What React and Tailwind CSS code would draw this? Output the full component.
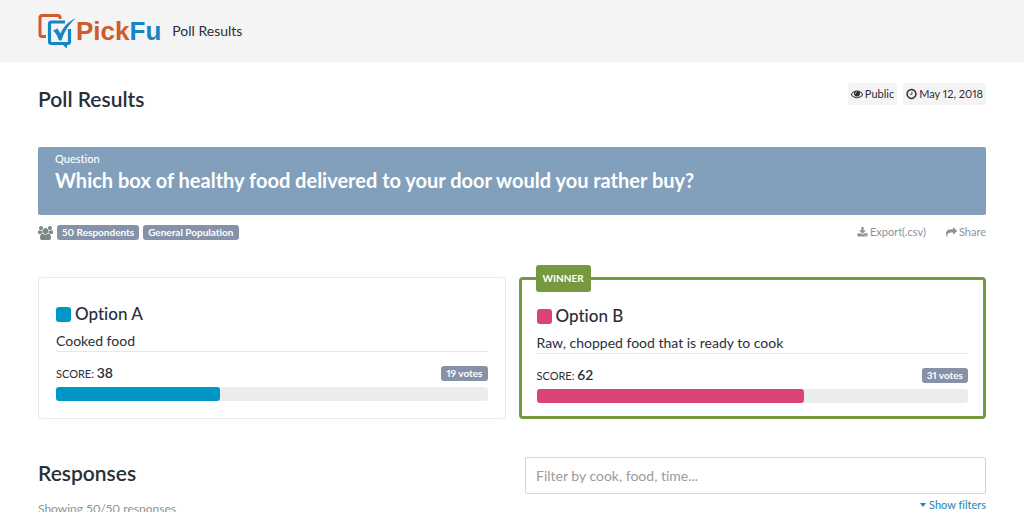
import React, { useState } from 'react';

const icons = {
  eye: {
    box: '0 0 1792 1792',
    d: 'M1664 960q-152-236-381-353 61 104 61 225 0 185-131.5 316.5t-316.5 131.5-316.5-131.5-131.5-316.5q0-121 61-225-229 117-381 353 133 205 333.5 326.5t434.5 121.5 434.5-121.5 333.5-326.5zm-720-384q0-20-14-34t-34-14q-125 0-214.5 89.5t-89.5 214.5q0 20 14 34t34 14 34-14 14-34q0-86 61-147t147-61q20 0 34-14t14-34zm848 384q0 34-20 69-140 230-376.5 368.5t-499.5 138.5-499.5-139-376.5-368q-20-35-20-69t20-69q140-229 376.5-368t499.5-139 499.5 139 376.5 368q20 35 20 69z',
  },
  clock: {
    box: '128 0 1536 1792',
    d: 'M1024 544v448q0 14-9 23t-23 9h-320q-14 0-23-9t-9-23v-64q0-14 9-23t23-9h224v-352q0-14 9-23t23-9h64q14 0 23 9t9 23zm416 352q0-148-73-273t-198-198-273-73-273 73-198 198-73 273 73 273 198 198 273 73 273-73 198-198 73-273zm224 0q0 209-103 385.5t-279.5 279.5-385.5 103-385.5-103-279.5-279.5-103-385.5 103-385.5 279.5-279.5 385.5-103 385.5 103 279.5 279.5 103 385.5z',
  },
  users: {
    box: '-64 0 1920 1792',
    d: 'M529 896q-162 5-265 128h-134q-82 0-138-40.5t-56-118.5q0-353 124-353 6 0 43.5 21t97.5 42.5 119 21.5q67 0 133-23-5 37-5 66 0 139 81 256zm1071 637q0 120-73 189.5t-194 69.5h-874q-121 0-194-69.5t-73-189.5q0-53 3.5-103.5t14-109 26.5-108.5 43-97.5 62-81 85.5-53.5 111.5-20q10 0 43 21.5t73 48 107 48 135 21.5 135-21.5 107-48 73-48 43-21.5q61 0 111.5 20t85.5 53.5 62 81 43 97.5 26.5 108.5 14 109 3.5 103.5zm-1024-1277q0 106-75 181t-181 75-181-75-75-181 75-181 181-75 181 75 75 181zm704 384q0 159-112.5 271.5t-271.5 112.5-271.5-112.5-112.5-271.5 112.5-271.5 271.5-112.5 271.5 112.5 112.5 271.5zm576 225q0 78-56 118.5t-138 40.5h-134q-103-123-265-128 81-117 81-256 0-29-5-66 66 23 133 23 59 0 119-21.5t97.5-42.5 43.5-21q124 0 124 353zm-128-609q0 106-75 181t-181 75-181-75-75-181 75-181 181-75 181 75 75 181z',
  },
  download: {
    box: '0 0 1792 1792',
    d: 'M1344 1344q0-26-19-45t-45-19-45 19-19 45 19 45 45 19 45-19 19-45zm256 0q0-26-19-45t-45-19-45 19-19 45 19 45 45 19 45-19 19-45zm128-224v320q0 40-28 68t-68 28h-1472q-40 0-68-28t-28-68v-320q0-40 28-68t68-28h465l135 136q58 56 136 56t136-56l136-136h464q40 0 68 28t28 68zm-325-569q17 41-14 70l-448 448q-18 19-45 19t-45-19l-448-448q-31-29-14-70 17-39 59-39h256v-448q0-26 19-45t45-19h256q26 0 45 19t19 45v448h256q42 0 59 39z',
  },
  share: {
    box: '0 0 1792 1792',
    d: 'M1792 640q0 26-19 45l-512 512q-19 19-45 19t-45-19-19-45v-256h-224q-98 0-175.5 6t-154 21.5-133 42.5-105.5 69.5-80 101-48.5 138.5-17.5 181q0 55 5 123 0 6 2.5 23.5t2.5 26.5q0 15-8.5 25t-23.5 10q-16 0-28-17-7-9-13-22t-13.5-30-10.5-24q-127-285-127-451 0-199 53-333 162-403 875-403h224v-256q0-26 19-45t45-19 45 19l512 512q19 19 19 45z',
  },
};

const Icon = ({ name, className }) => (
  <svg viewBox={icons[name].box} className={className} fill="currentColor" aria-hidden="true">
    <path d={icons[name].d} />
  </svg>
);

const Logo = () => (
  <a href="#" className="flex items-center" aria-label="PickFu">
    <svg viewBox="0 0 38 36" className="h-9 w-[38px]" fill="none" aria-hidden="true">
      <path
        d="M22 6V4.5A2 2 0 0 0 20 2.5H4A2 2 0 0 0 2 4.5v17A2 2 0 0 0 4 23.500h4"
        stroke="#cf5b2b"
        strokeWidth="3"
      />
      <path
        d="M27 9H13.5a2 2 0 0 0-2 2v17.500a2 2 0 0 0 2 2h16a2 2 0 0 0 2-2V16"
        stroke="#1585c4"
        strokeWidth="3.200"
      />
      <path d="M24 31h5.500L28.500 35.500z" fill="#1585c4" />
      <path
        d="M15 17.500l4.500-2 3 5C26 13 31 8 38 5c-7 6-11.500 13-14.500 22.500h-2.500C19.500 23 18 20 15 17.500z"
        fill="#1585c4"
      />
    </svg>
    <span className="font-['Liberation_Sans',sans-serif] text-[26px] leading-9 font-bold text-[#1585c4]">
      <span className="text-[#cf5b2b]">Pick</span>Fu
    </span>
  </a>
);

const Badge = ({ children }) => (
  <span className="rounded-[3px] bg-[#8592a8] px-[5px] text-[10px] leading-[15px] font-bold text-white">
    {children}
  </span>
);

const options = [
  { name: 'Option A', text: 'Cooked food', score: 38, votes: 19, fill: 'bg-[#0097c7]' },
  { name: 'Option B', text: 'Raw, chopped food that is ready to cook', score: 62, votes: 31, fill: 'bg-[#db4377]', winner: true },
];

const OptionCard = ({ option }) => (
  <div
    className={
      option.winner
        ? 'relative rounded-[4px] border-3 border-[#76983f] px-[15px] pt-[26px] pb-[13px]'
        : 'relative rounded-[4px] border border-[#ebebeb] px-[17px] pt-[26px] pb-[17px]'
    }
  >
    {option.winner && (
      <span className="absolute -top-[15px] left-[14px] rounded-[3px] bg-[#76983f] px-[7px] text-[10px] leading-[27px] font-bold text-white">
        WINNER
      </span>
    )}
    <h3 className="flex items-center gap-1 text-[17px] leading-5 font-medium">
      <span className={`size-[15px] rounded-[3px] ${option.fill}`} />
      {option.name}
    </h3>
    <p className="mt-[7px] border-b border-[#e6e6e6] text-sm leading-5">{option.text}</p>
    <div className="mt-[11px] flex items-center justify-between">
      <p className="text-[11px] leading-[19px]">
        SCORE: <span className="text-sm leading-[19px] font-semibold">{option.score}</span>
      </p>
      <Badge>{option.votes} votes</Badge>
    </div>
    <div className="mt-1 h-[14px] rounded-[3px] bg-[#eaecee]">
      <div className={`h-full rounded-[3px] ${option.fill}`} style={{ width: `${option.score}%` }} />
    </div>
  </div>
);

const App = () => {
  const [filter, setFilter] = useState('');

  return (
    <div className="h-screen overflow-hidden bg-white font-[Lato,sans-serif] text-[#292f36] proportional-nums [font-feature-settings:'liga'_0]">
      <header className="flex h-[62px] items-center gap-[11px] bg-[#f4f4f4] px-[38px]">
        <Logo />
        <span className="text-sm">Poll Results</span>
      </header>

      <main className="px-[38px] pt-[21px]">
        <div className="flex items-start justify-between">
          <h1 className="pt-[3px] text-[21px] leading-[26px] font-semibold">Poll Results</h1>
          <div className="flex gap-[6px] text-[11px] leading-[22px]">
            <span className="flex items-center gap-[2px] rounded-[3px] bg-[#f4f4f4] px-[3px]">
              <Icon name="eye" className="size-3" />
              Public
            </span>
            <span className="flex items-center gap-[2px] rounded-[3px] bg-[#f4f4f4] px-[3px]">
              <Icon name="clock" className="h-3 w-[11px]" />
              May 12, 2018
            </span>
          </div>
        </div>

        <section className="mt-[35px] h-[68px] rounded-[2px] bg-[#829fbc] px-[17px] pt-1 text-white">
          <p className="text-[11px] leading-4 font-medium">Question</p>
          <h2 className="text-xl leading-[26px] font-bold">
            Which box of healthy food delivered to your door would you rather buy?
          </h2>
        </section>

        <div className="mt-2 flex items-center justify-between">
          <div className="flex items-center gap-1 pt-px">
            <Icon name="users" className="h-[14px] w-[15px] text-[#7f8689]" />
            <Badge>50 Respondents</Badge>
            <Badge>General Population</Badge>
          </div>
          <div className="flex gap-5 text-[11px] leading-[18px] text-[#8b9399]">
            <button type="button" className="flex items-center gap-[2px]">
              <Icon name="download" className="size-[11px]" />
              Export(.csv)
            </button>
            <button type="button" className="flex items-center gap-[2px]">
              <Icon name="share" className="size-[11px]" />
              Share
            </button>
          </div>
        </div>

        <div className="mt-9 grid grid-cols-2 gap-[13px]">
          {options.map((option) => (
            <OptionCard key={option.name} option={option} />
          ))}
        </div>

        <div className="mt-[38px] flex justify-between">
          <div>
            <h2 className="pt-1 text-[21px] leading-6 font-semibold">Responses</h2>
            <p className="mt-4 text-xs leading-4 text-[#8b9399]">Showing 50/50 responses</p>
          </div>
          <div className="w-[calc(50%-13px)]">
            <input
              type="text"
              aria-label="Filter responses"
              value={filter}
              onChange={(e) => setFilter(e.target.value)}
              placeholder="Filter by cook, food, time..."
              className="h-[37px] w-full rounded-[2px] border border-[#d4d4d4] px-[10px] text-sm placeholder:text-[#9b9b9b]"
            />
            <button type="button" className="mt-[3px] ml-auto flex items-center gap-[3px] text-[11px] leading-4 text-[#2583b0]">
              <svg viewBox="0 0 6 4" className="h-1 w-[6px]" fill="currentColor" aria-hidden="true">
                <path d="M0 0h6L3 4z" />
              </svg>
              Show filters
            </button>
          </div>
        </div>
      </main>
    </div>
  );
};

export default App;
